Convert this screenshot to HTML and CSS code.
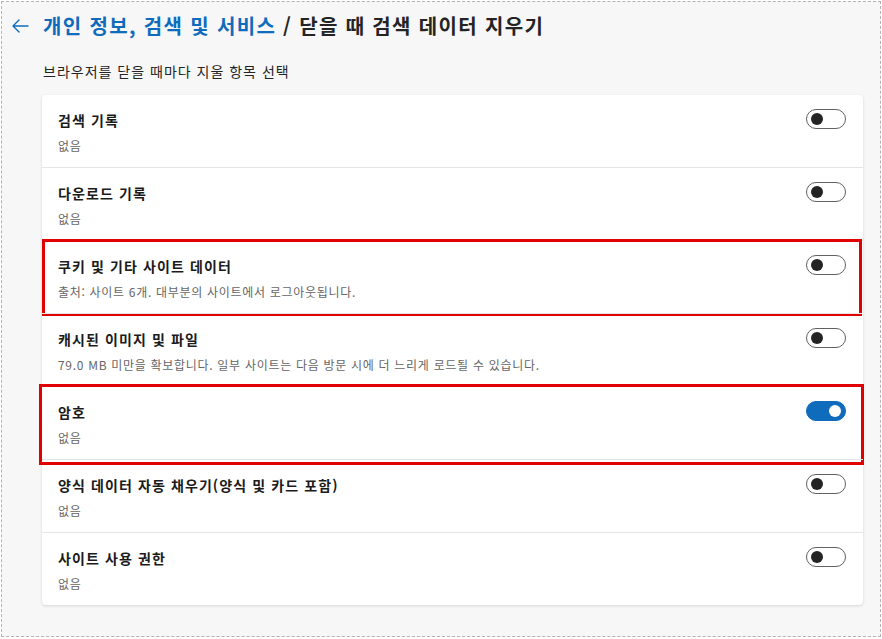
FILE: index.html
```html
<!DOCTYPE html>
<html lang="ko">
<head>
    <meta charset="UTF-8">
    <title>검색 데이터 지우기</title>
    <link rel="stylesheet" href="styles.css">
</head>
<body>
    <div class="frame">
        <div class="header">
            <svg class="back" width="20" height="20" viewBox="0 0 20 20">
                <path d="M18 10H3M9 4L3 10l6 6" fill="none" stroke="#0f6cbd" stroke-width="1.4" stroke-linecap="round" stroke-linejoin="round"/>
            </svg>
            <h1 class="title"><span class="crumb">개인 정보, 검색 및 서비스</span> / 닫을 때 검색 데이터 지우기</h1>
        </div>
        <p class="lead">브라우저를 닫을 때마다 지울 항목 선택</p>
        <div class="card">
            <div class="row">
                <div class="text">
                    <div class="name">검색 기록</div>
                    <div class="desc">없음</div>
                </div>
                <span class="toggle"></span>
            </div>
            <div class="row">
                <div class="text">
                    <div class="name">다운로드 기록</div>
                    <div class="desc">없음</div>
                </div>
                <span class="toggle"></span>
            </div>
            <div class="row mark-a">
                <div class="text">
                    <div class="name">쿠키 및 기타 사이트 데이터</div>
                    <div class="desc">출처: 사이트 6개. 대부분의 사이트에서 로그아웃됩니다.</div>
                </div>
                <span class="toggle"></span>
            </div>
            <div class="row">
                <div class="text">
                    <div class="name">캐시된 이미지 및 파일</div>
                    <div class="desc">79.0 MB 미만을 확보합니다. 일부 사이트는 다음 방문 시에 더 느리게 로드될 수 있습니다.</div>
                </div>
                <span class="toggle"></span>
            </div>
            <div class="row mark-b">
                <div class="text">
                    <div class="name">암호</div>
                    <div class="desc">없음</div>
                </div>
                <span class="toggle on"></span>
            </div>
            <div class="row">
                <div class="text">
                    <div class="name">양식 데이터 자동 채우기(양식 및 카드 포함)</div>
                    <div class="desc">없음</div>
                </div>
                <span class="toggle"></span>
            </div>
            <div class="row">
                <div class="text">
                    <div class="name">사이트 사용 권한</div>
                    <div class="desc">없음</div>
                </div>
                <span class="toggle"></span>
            </div>
        </div>
    </div>
</body>
</html>
```

FILE: styles.css
```css
*{padding: 0;margin: 0;box-sizing: border-box;}
body{background: #fff;font-family: "Noto Sans CJK KR", "Noto Sans", sans-serif;color: #1b1b1b;}
.frame{margin: 1px;width: 880px;height: 636px;border: 1px dashed #b4b4b4;background: #f7f7f7;}

.header{display: flex;align-items: center;padding: 10px 0 0 8px;height: 38px;}
.back{flex: none;}
.title{margin-left: 13px;font-size: 20px;font-weight: 700;line-height: 28px;color: #242424;letter-spacing: 1.35px;}
.crumb{color: #0f6cbd;}

.lead{margin: 21px 0 0 41px;font-size: 14px;line-height: 20px;color: #242424;letter-spacing: 1px;}

.card{margin: 14px 17px 0 40px;background: #fff;border-radius: 4px;box-shadow: 0 1px 3px rgba(0,0,0,.14);}
.row{position: relative;display: flex;justify-content: space-between;align-items: flex-start;padding: 15px 17px 11px 16px;height: 73px;border-top: 1px solid #e6e6e6;}
.row:first-child{border-top: none;height: 72px;}
.name{font-size: 14px;font-weight: 600;line-height: 20px;color: #1b1b1b;letter-spacing: 1.1px;}
.desc{margin-top: 7px;font-size: 12px;line-height: 18px;color: #666;letter-spacing: 0.7px;}

.toggle{position: relative;flex: none;margin-top: -1px;width: 40px;height: 20px;border: 1px solid #616161;border-radius: 10px;background: #fff;}
.toggle::after{content: "";position: absolute;top: 3px;left: 4px;width: 12px;height: 12px;border-radius: 50%;background: #242424;}
.toggle.on{background: #0f6cbd;border-color: #0f6cbd;}
.toggle.on::after{left: auto;right: 4px;background: #fff;}

/* red annotation boxes drawn over the rows */
.mark-a::after,.mark-b::after{content: "";position: absolute;border: 3px solid #e00000;pointer-events: none;}
.mark-a::after{top: -2px;left: 0;right: 1px;bottom: -3px;}
.mark-b::after{top: -3px;left: -3px;right: -1px;bottom: -6px;}
```
